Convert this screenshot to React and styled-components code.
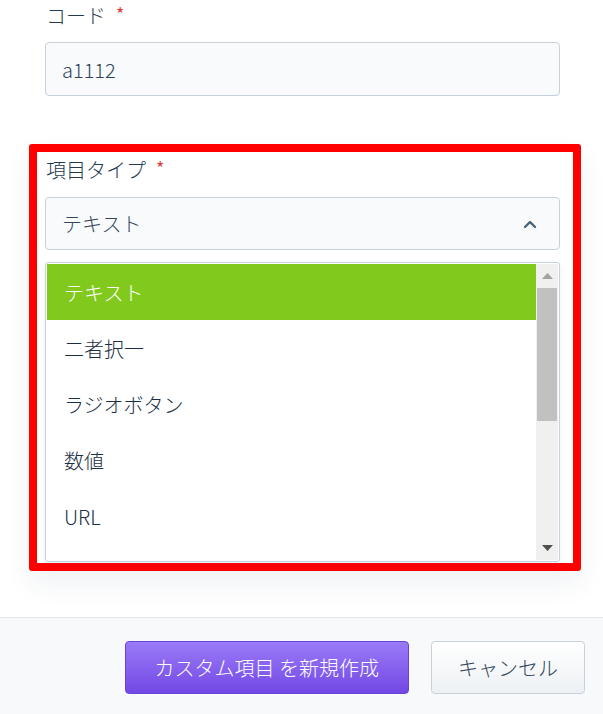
import React from "react";
import styled, { createGlobalStyle } from "styled-components";

const Global = createGlobalStyle`
  html, body { margin: 0; padding: 0; background: #ffffff; }
  body { font-family: "Noto Sans CJK JP", "Noto Sans", sans-serif; font-weight: 300; }
  * { box-sizing: border-box; }
`;

const Page = styled.div`
  width: 603px;
  height: 714px;
  display: flex;
  flex-direction: column;
  overflow: hidden;
  background: #ffffff;
`;

const Body = styled.div`
  flex: 1;
  display: flex;
  flex-direction: column;
  padding: 4px 43px 0 45px;
`;

const Field = styled.div`
  display: flex;
  flex-direction: column;
`;

const Label = styled.div`
  display: flex;
  align-items: center;
  gap: 10px;
  height: 24px;
  font-size: 20px;
  line-height: 24px;
  color: #243a50;
  padding-left: 1px;
  margin-bottom: ${(p) => p.$gap}px;
`;

const Required = styled.span`
  color: #e03a3a;
  font-size: 18px;
  font-weight: 400;
  line-height: 1;
  position: relative;
  top: -3px;
`;

const Input = styled.div`
  height: 54px;
  border: 1px solid #c6d1dc;
  border-radius: 4px;
  background: #f8fafc;
  display: flex;
  align-items: center;
  padding-left: 16px;
  font-size: 20px;
  color: #2f4358;
`;

const Highlight = styled.div`
  margin: 48px -21px 0 -16px;
  border: 8px solid #ff0000;
  border-radius: 3px;
  padding: 6px 13px 1px 8px;
  box-shadow: 0 12px 28px rgba(30, 50, 80, 0.07);
`;

const Select = styled.div`
  height: 53px;
  border: 1px solid #c6d1dc;
  border-radius: 4px;
  background: #f8fafc;
  display: flex;
  align-items: center;
  justify-content: space-between;
  padding: 0 22px 0 16px;
  font-size: 20px;
  color: #34475a;
`;

const List = styled.div`
  margin-top: 12px;
  height: 300px;
  border: 1px solid #c6d1dc;
  border-radius: 3px;
  padding: 1px;
  background: #ffffff;
  display: flex;
  overflow: hidden;
  box-shadow: 0 2px 6px rgba(30, 50, 80, 0.08);
`;

const Items = styled.div`
  flex: 1;
  display: flex;
  flex-direction: column;
  overflow: hidden;
`;

const Item = styled.div`
  flex: none;
  height: 56px;
  display: flex;
  align-items: center;
  padding-left: 17px;
  font-size: 20px;
  color: ${(p) => (p.$active ? "#ffffff" : "#1a2f45")};
  background: ${(p) => (p.$active ? "#82c91e" : "transparent")};
`;

const Scrollbar = styled.div`
  width: 22px;
  flex: none;
  background: #f0f0f0;
  display: flex;
  flex-direction: column;
  align-items: center;
`;

const ArrowBox = styled.div`
  height: 24px;
  width: 100%;
  display: flex;
  align-items: center;
  justify-content: center;
`;

const Thumb = styled.div`
  width: 20px;
  height: 133px;
  background: #c1c1c1;
`;

const Track = styled.div`
  flex: 1;
`;

const Footer = styled.div`
  height: 97px;
  border-top: 1px solid #e2e7ec;
  background: #f8f9fb;
  display: flex;
  justify-content: flex-end;
  align-items: flex-start;
  gap: 22px;
  padding: 23px 18px 0 0;
`;

const Button = styled.button`
  height: 53px;
  border-radius: 4px;
  font-family: "Noto Sans CJK JP", "Noto Sans", sans-serif;
  font-weight: 300;
  font-size: 20px;
  padding: 0 ${(p) => (p.$primary ? 29 : 26)}px;
  cursor: pointer;
  color: ${(p) => (p.$primary ? "#ffffff" : "#34475a")};
  border: 1px solid ${(p) => (p.$primary ? "#6a44d8" : "#c6d1dc")};
  background: ${(p) =>
    p.$primary
      ? "linear-gradient(#9a7bf8, #7348e4)"
      : "linear-gradient(#ffffff, #edf1f4)"};
`;

const Chevron = () => (
  <svg width="14" height="10" viewBox="0 0 14 10">
    <polyline
      points="2,8 7,3 12,8"
      fill="none"
      stroke="#4a6278"
      strokeWidth="2.4"
      strokeLinecap="round"
      strokeLinejoin="round"
    />
  </svg>
);

const Tri = ({ up, color }) => (
  <svg width="11" height="6" viewBox="0 0 11 6">
    <polygon points={up ? "0,6 5.5,0 11,6" : "0,0 5.5,6 11,0"} fill={color} />
  </svg>
);

const options = ["テキスト", "二者択一", "ラジオボタン", "数値", "URL"];

export default function App() {
  return (
    <Page>
      <Global />
      <Body>
        <Field>
          <Label $gap={14}>
            コード<Required>*</Required>
          </Label>
          <Input>a1112</Input>
        </Field>
        <Highlight>
          <Label $gap={15}>
            項目タイプ<Required>*</Required>
          </Label>
          <Select>
            テキスト
            <Chevron />
          </Select>
          <List>
            <Items>
              {options.map((o, i) => (
                <Item key={o} $active={i === 0}>
                  {o}
                </Item>
              ))}
            </Items>
            <Scrollbar>
              <ArrowBox>
                <Tri up color="#a3a3a3" />
              </ArrowBox>
              <Thumb />
              <Track />
              <ArrowBox>
                <Tri color="#505050" />
              </ArrowBox>
            </Scrollbar>
          </List>
        </Highlight>
      </Body>
      <Footer>
        <Button $primary>カスタム項目 を新規作成</Button>
        <Button>キャンセル</Button>
      </Footer>
    </Page>
  );
}
